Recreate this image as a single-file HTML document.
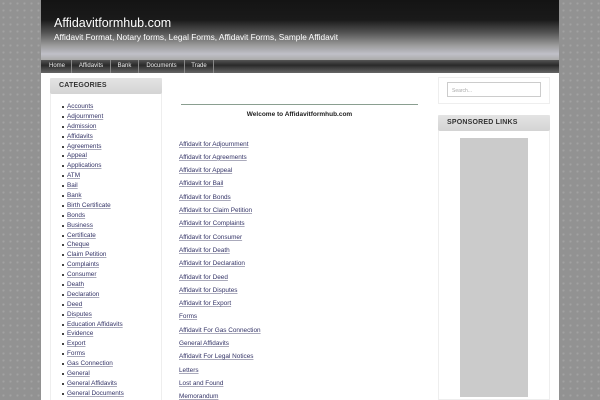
<!DOCTYPE html>
<html><head><style>
*{margin:0;padding:0;box-sizing:border-box}
body{width:600px;height:400px;overflow:hidden;font-family:"Liberation Sans",sans-serif;
background-color:#929292;background-image:radial-gradient(#a2a2a2 1px,transparent 1.2px);background-size:7px 7px;position:relative}
#page{position:absolute;left:41px;top:0;width:518px;height:400px;background:#fff;overflow:hidden}
#hdr{position:absolute;left:0;top:0;width:518px;height:60px;background:linear-gradient(#141414 0,#1a1a1a 20px,#555 33px,#999 45px,#c0c0c8 54px,#aaa 60px)}
#hdr h1{position:absolute;left:13px;top:16px;font-size:12.5px;font-weight:normal;color:#fff}
#hdr p{position:absolute;left:13px;top:32px;font-size:8.3px;color:#fff}
#nav{position:absolute;left:0;top:60px;width:518px;height:13px;background:linear-gradient(#555,#2a2a2a 40%,#666)}
#nav span{position:absolute;top:0;height:13px;font-size:6px;color:#eee;line-height:13px;text-align:center;border-right:1px solid #888}
.box{position:absolute;border:1px solid #eee}
.bh{position:absolute;background:linear-gradient(#e4e4e4,#d4d4d4);border-radius:2px;font-size:7px;font-weight:bold;color:#333;line-height:16px;padding-left:9px;letter-spacing:.2px}
ul{position:absolute;left:26px;top:102px;list-style:none}
li{font-size:6.4px;height:9.9px;line-height:9.9px;color:#336;position:relative}
li:before{content:"";position:absolute;left:-5px;top:4px;width:2px;height:2px;background:#444}
li span,.ml span{text-decoration:underline;text-decoration-color:#aab}
.ml{position:absolute;left:138px;font-size:6.4px;color:#336}
</style></head><body>
<div id="page">
<div id="hdr"><h1>Affidavitformhub.com</h1><p>Affidavit Format, Notary forms, Legal Forms, Affidavit Forms, Sample Affidavit</p></div>
<div id="nav">
<span style="left:2px;width:29px">Home</span>
<span style="left:31px;width:39px">Affidavits</span>
<span style="left:70px;width:28px">Bank</span>
<span style="left:98px;width:46px">Documents</span>
<span style="left:144px;width:29px">Trade</span>
</div>
<div class="box" style="left:9px;top:78px;width:112px;height:330px"></div>
<div class="bh" style="left:9px;top:78px;width:112px;height:16px">CATEGORIES</div>
<ul>
<li><span>Accounts</span></li><li><span>Adjournment</span></li><li><span>Admission</span></li><li><span>Affidavits</span></li><li><span>Agreements</span></li><li><span>Appeal</span></li><li><span>Applications</span></li><li><span>ATM</span></li><li><span>Bail</span></li><li><span>Bank</span></li><li><span>Birth Certificate</span></li><li><span>Bonds</span></li><li><span>Business</span></li><li><span>Certificate</span></li><li><span>Cheque</span></li><li><span>Claim Petition</span></li><li><span>Complaints</span></li><li><span>Consumer</span></li><li><span>Death</span></li><li><span>Declaration</span></li><li><span>Deed</span></li><li><span>Disputes</span></li><li><span>Education Affidavits</span></li><li><span>Evidence</span></li><li><span>Export</span></li><li><span>Forms</span></li><li><span>Gas Connection</span></li><li><span>General</span></li><li><span>General Affidavits</span></li><li><span>General Documents</span></li>
</ul>
<div style="position:absolute;left:140px;top:104px;width:237px;height:1px;background:#8a9e90"></div>
<div style="position:absolute;left:140px;top:111px;width:237px;text-align:center;font-size:6.5px;font-weight:bold;color:#222">Welcome to Affidavitformhub.com</div>
<div class="ml" style="top:140.5px"><span>Affidavit for Adjournment</span></div>
<div class="ml" style="top:153.8px"><span>Affidavit for Agreements</span></div>
<div class="ml" style="top:167.1px"><span>Affidavit for Appeal</span></div>
<div class="ml" style="top:180.4px"><span>Affidavit for Bail</span></div>
<div class="ml" style="top:193.7px"><span>Affidavit for Bonds</span></div>
<div class="ml" style="top:207px"><span>Affidavit for Claim Petition</span></div>
<div class="ml" style="top:220.3px"><span>Affidavit for Complaints</span></div>
<div class="ml" style="top:233.6px"><span>Affidavit for Consumer</span></div>
<div class="ml" style="top:246.9px"><span>Affidavit for Death</span></div>
<div class="ml" style="top:260.2px"><span>Affidavit for Declaration</span></div>
<div class="ml" style="top:273.5px"><span>Affidavit for Deed</span></div>
<div class="ml" style="top:286.8px"><span>Affidavit for Disputes</span></div>
<div class="ml" style="top:300.1px"><span>Affidavit for Export</span></div>
<div class="ml" style="top:313.4px"><span>Forms</span></div>
<div class="ml" style="top:326.7px"><span>Affidavit For Gas Connection</span></div>
<div class="ml" style="top:340px"><span>General Affidavits</span></div>
<div class="ml" style="top:353.3px"><span>Affidavit For Legal Notices</span></div>
<div class="ml" style="top:366.6px"><span>Letters</span></div>
<div class="ml" style="top:379.9px"><span>Lost and Found</span></div>
<div class="ml" style="top:393.2px"><span>Memorandum</span></div>
<div class="box" style="left:397px;top:77px;width:112px;height:27px"></div>
<div style="position:absolute;left:406px;top:82px;width:94px;height:15px;border:1px solid #ccc;font-size:5px;color:#aaa;padding:5px 4px">Search...</div>
<div class="box" style="left:397px;top:115px;width:112px;height:285px"></div>
<div class="bh" style="left:397px;top:115px;width:112px;height:16px">SPONSORED LINKS</div>
<div style="position:absolute;left:419px;top:138px;width:68px;height:259px;background:#cbcbcb"></div>
</div>
</body></html>
